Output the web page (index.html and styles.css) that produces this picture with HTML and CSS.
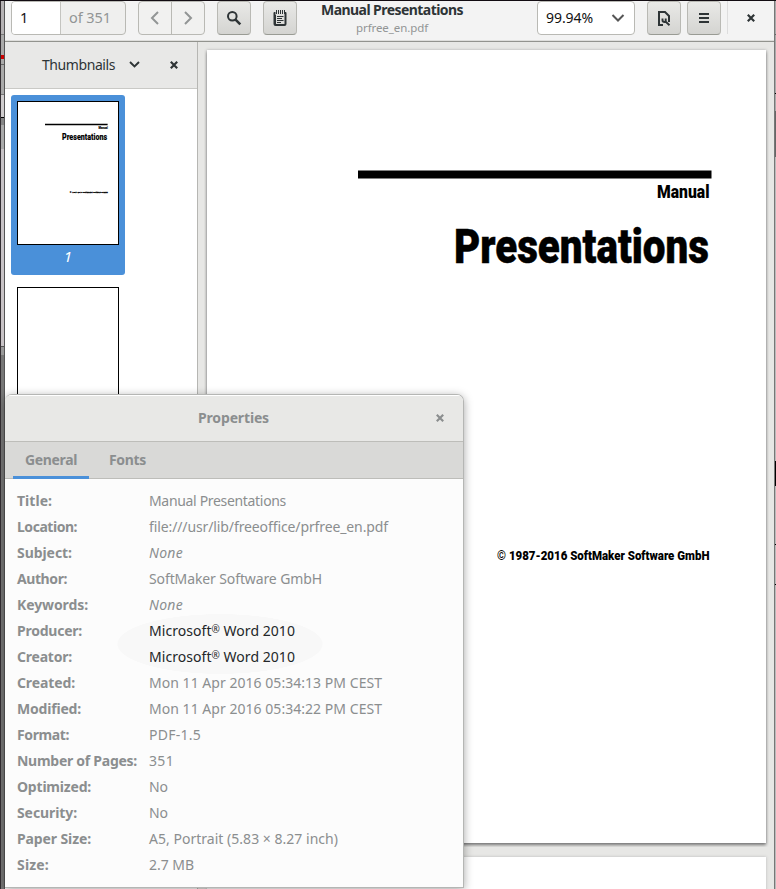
FILE: index.html
```html
<!DOCTYPE html>
<html lang="en">
<head>
<meta charset="utf-8">
<title>Manual Presentations</title>
<link rel="stylesheet" href="styles.css">
</head>
<body>
<div class="desktop">
  <div class="edge edge-left"></div>
  <main class="window">
    <header class="toolbar">
      <div class="page-entry"><span class="current">1</span><span class="total"><span class="t" data-w="42">of 351</span></span></div>
      <div class="nav">
        <span class="nav-btn"><svg width="16" height="16"><path d="M11 2 5 8l6 6"/></svg></span>
        <span class="nav-btn"><svg width="16" height="16"><path d="m5 2 6 6-6 6"/></svg></span>
      </div>
      <div class="button search"><svg width="16" height="16" fill="none" stroke="#2e3436"><circle cx="6.3" cy="6.3" r="4.3" stroke-width="2"/><path d="m9.3 9.3 5 5" stroke-width="2.6"/></svg></div>
      <div class="button notes"><svg width="16" height="16"><path fill="#2e3436" fill-rule="evenodd" d="M1.500 3q0-1 1-1H3.500v3h9V2h1q1 0 1 1V14q0 2-2 2h-9q-2 0-2-2zM4 5v9h8.500V5z"/><path d="M4.500 0v4M6.500 0v4M8.500 0v4M10.500 0v4M12.500 0v4" stroke="#2e3436"/><path d="M5 6.500h6.500M5 8.500h5M5 10.500h6.500M5 12.500h4" stroke="#2e3436"/></svg></div>
      <div class="titles"><b><span class="t" data-w="142">Manual Presentations</span></b><small><span class="t" data-w="72">prfree_en.pdf</span></small></div>
      <div class="zoom"><span class="t" data-w="47">99.94%</span><svg width="16" height="16"><path d="m2.500 5 5.500 5.500L13.500 5"/></svg></div>
      <div class="button doc"><svg width="16" height="16" fill="none" stroke="#2e3436" stroke-width="2"><path d="M7 15H3V2h6l4 4v6"/><path d="M6.500 8.500v1.800q0 1.700 2.200 1.700h1V8.500M9.500 11.500l4 3.700" stroke-width="1.900"/></svg></div>
      <div class="button menu"><svg width="16" height="16"><path d="M3 4h10M3 8h10M3 12h10" stroke="#2e3436" stroke-width="2"/></svg></div>
      <div class="close-area"><svg class="close" width="8" height="8"><path d="m.8.8 6.400 6.400M7.200.8.8 7.200"/></svg></div>
    </header>
    <div class="content">
      <aside class="sidebar">
        <div class="side-head"><span class="t" data-w="73">Thumbnails</span><svg class="chevron" width="12" height="8"><path d="m1 1 4.500 4.500L10 1"/></svg><svg class="close" width="8" height="8"><path d="m.8.8 6.400 6.400M7.200.8.8 7.200"/></svg></div>
        <div class="thumbs">
          <div class="thumb selected">
            <svg class="sheet" viewBox="0 0 559 793" preserveAspectRatio="none">
              <path d="M151 126h350" stroke="#000" stroke-width="9"/>
              <text x="450" y="150" class="art" font-size="20" textLength="52" lengthAdjust="spacingAndGlyphs">Manual</text>
              <text x="246" y="213" class="art" font-size="48" textLength="253" lengthAdjust="spacingAndGlyphs">Presentations</text>
              <text x="290" y="510" class="art bold-small" font-size="13" textLength="212" lengthAdjust="spacingAndGlyphs">© 1987-2016 SoftMaker Software GmbH</text>
            </svg>
            <i>1</i>
          </div>
          <div class="thumb"><div class="sheet"></div></div>
        </div>
      </aside>
      <section class="document">
        <article class="page">
          <svg width="559" height="793">
            <path d="M151 124.500h353.500" stroke="#000" stroke-width="8"/>
            <text x="450" y="148" class="art fine" font-size="18.500" textLength="52.500" lengthAdjust="spacingAndGlyphs">Manual</text>
            <text x="247" y="213" class="art" font-size="48" textLength="255" lengthAdjust="spacingAndGlyphs">Presentations</text>
            <text x="290" y="510" class="art fine" font-size="12.500" textLength="212.500" lengthAdjust="spacingAndGlyphs">© 1987-2016 SoftMaker Software GmbH</text>
          </svg>
        </article>
        <article class="page next"></article>
      </section>
    </div>
  </main>
  <div class="edge edge-right"></div>
  <section class="dialog">
    <header class="dialog-head"><b><span class="t" data-w="71">Properties</span></b><svg class="close" width="8" height="8"><path d="m.8.8 6.400 6.400M7.200.8.8 7.200"/></svg></header>
    <nav class="tabs"><span class="tab active"><span class="t" data-w="52">General</span></span><span class="tab"><span class="t" data-w="37">Fonts</span></span></nav>
    <dl class="props">
      <dt><span class="t" data-w="35">Title:</span></dt><dd><span class="t" data-w="137">Manual Presentations</span></dd>
      <dt><span class="t" data-w="60">Location:</span></dt><dd><span class="t" data-w="239">file:///usr/lib/freeoffice/prfree_en.pdf</span></dd>
      <dt><span class="t" data-w="55">Subject:</span></dt><dd><span class="t it" data-w="34">None</span></dd>
      <dt><span class="t" data-w="50">Author:</span></dt><dd><span class="t" data-w="173">SoftMaker Software GmbH</span></dd>
      <dt><span class="t" data-w="71">Keywords:</span></dt><dd><span class="t it" data-w="34">None</span></dd>
      <dt><span class="t" data-w="65">Producer:</span></dt><dd class="strong"><span class="t" data-w="146">Microsoft<span class="reg">®</span> Word 2010</span></dd>
      <dt><span class="t" data-w="55">Creator:</span></dt><dd class="strong"><span class="t" data-w="146">Microsoft<span class="reg">®</span> Word 2010</span></dd>
      <dt><span class="t" data-w="58">Created:</span></dt><dd><span class="t" data-w="233">Mon 11 Apr 2016 05:34:13 PM CEST</span></dd>
      <dt><span class="t" data-w="64">Modified:</span></dt><dd><span class="t" data-w="233">Mon 11 Apr 2016 05:34:22 PM CEST</span></dd>
      <dt><span class="t" data-w="52">Format:</span></dt><dd><span class="t" data-w="52">PDF-1.5</span></dd>
      <dt><span class="t" data-w="120">Number of Pages:</span></dt><dd><span class="t" data-w="25">351</span></dd>
      <dt><span class="t" data-w="74">Optimized:</span></dt><dd><span class="t" data-w="19">No</span></dd>
      <dt><span class="t" data-w="60">Security:</span></dt><dd><span class="t" data-w="19">No</span></dd>
      <dt><span class="t" data-w="74">Paper Size:</span></dt><dd><span class="t" data-w="189">A5, Portrait (5.83 × 8.27 inch)</span></dd>
      <dt><span class="t" data-w="32">Size:</span></dt><dd><span class="t" data-w="45">2.7 MB</span></dd>
    </dl>
  </section>
</div>
<script src="fit.js"></script>
</body>
</html>
```
FILE: fit.js
```js
// Tracks each label so that it fills the width given in data-w.
document.querySelectorAll('.t').forEach(function (el) {
  var natural = el.getBoundingClientRect().width;
  var spacing = (Number(el.dataset.w) - natural) / el.textContent.length;
  el.style.letterSpacing = spacing + 'px';
});
```
FILE: styles.css
```css
* { box-sizing: border-box; }
body { margin: 0; font: 14px/20px "Noto Sans", "Open Sans", sans-serif; color: #2e3436; }
svg { display: block; flex: none; }
.t { display: inline-block; white-space: nowrap; font-variant-ligatures: none; }
.desktop { position: relative; display: flex; width: 776px; height: 889px; overflow: hidden; border-top: 1px solid #120c12; background: #777; }
.edge-left { width: 5px; background:
  linear-gradient(90deg, transparent 4px, #555 4px),
  linear-gradient(#c00, #c00) 1px 54px / 3px 4px no-repeat,
  linear-gradient(90deg, #342f33 1px, transparent 1px),
  linear-gradient(#b5b2b4 33px, #777 33px 34px, #aaa 34px 63px, #666 63px 64px, #aaa 64px 93px, #777 93px 94px, #d0cdce 94px 116px, #000 116px 117px, #858585 117px 124px, #aaa 124px 148px, #c8c3c6 148px 345px, #555 345px 346px, #999 346px 354px, #777 354px); }
.edge-right { width: 2px; background: linear-gradient(90deg, #777 1px, transparent 1px), linear-gradient(#aaa 33px, #666 33px 34px, #aaa 34px 92px, #000 92px 93px, #aaa 93px 110px, #666 110px 156px, #bbb 156px 460px, #000 460px 485px, #bbb 485px 543px, #000 543px 544px, #bbb 544px 583px, #000 583px 584px, #bbb 584px); }
.window { width: 769px; display: flex; flex-direction: column; background: #e7e7e5; }

.toolbar { height: 41px; display: flex; align-items: flex-start; padding-left: 6px; background: #f3f3f3; border-bottom: 1px solid #92938e; box-shadow: inset 0 -1px #dededc; flex: none; }
.page-entry, .nav, .zoom, .button { height: 34px; border: 1px solid #b9b9b4; border-radius: 4px; display: flex; align-items: center; flex: none; }
.page-entry { width: 115px; overflow: hidden; background: #efefee; color: #929595; font-size: 14.500px; }
.page-entry .current { width: 49px; height: 32px; padding: 5px 8px; background: #fff; color: #111; border-right: 1px solid #c4c4c0; }
.page-entry .total { padding-left: 8px; margin-top: -2px; }
.nav { width: 67px; margin-left: 12px; background: #f1f1f0; }
.nav-btn { flex: 1; height: 32px; display: grid; place-items: center; }
.nav-btn + .nav-btn { border-left: 1px solid #b9b9b4; }
.nav path { fill: none; stroke: #929595; stroke-width: 2; }
.button { width: 34px; justify-content: center; background: linear-gradient(#e9e9e7, #d4d4d1); border-bottom-color: #999b94; }
.search { margin-left: 12px; }
.notes { margin-left: 12px; }
.titles { width: 190px; display: flex; flex-direction: column; align-items: center; }
.titles b { height: 18px; line-height: 18px; }
.titles small { font-size: 11.500px; line-height: 18px; color: #929595; }
.zoom { width: 98px; margin-left: 50px; padding: 0 8px; justify-content: space-between; background: #fff; color: #111; }
.zoom path { fill: none; stroke: #555; stroke-width: 2; }
.doc { margin-left: 12px; }
.menu { margin-left: 6px; }
.close-area { height: 33px; margin-left: 6px; padding-left: 19px; border-left: 1px solid #ddd; display: flex; align-items: center; }
.close path, .chevron path { fill: none; stroke: #2e3436; stroke-width: 2.200; }
.chevron path { stroke-width: 1.900; }

.content { flex: 1; min-height: 0; display: flex; }
.sidebar { width: 193px; border-right: 1px solid #b6b6b3; background: #fff; }
.side-head { height: 47px; display: flex; align-items: center; padding-left: 37px; background: #e8e8e7; border-bottom: 1px solid #c9c9c6; }
.chevron { margin-left: 14px; }
.side-head .close { margin-left: 29px; }
.thumbs { padding: 6px; }
.thumb { width: 114px; height: 180px; padding: 6px; border-radius: 3px; }
.thumb + .thumb { margin-top: 6px; }
.selected { background: #4a90d9; color: #fff; text-align: center; }
.sheet { width: 102px; height: 144px; background: #fff; border: 1px solid #000; }
.selected i { display: block; line-height: 23px; font-size: 15px; }
.document { flex: 1; padding: 8px 8px 0 9px; overflow: hidden; }
.page { height: 793px; width: 559px; background: #fff; box-shadow: 0 2px 3px #777, 0 0 3px #bbb; clip-path: inset(-3px -3px -4px -3px); }
.next { margin-top: 14px; box-shadow: 0 0 3px #bbb; }
.art { font-family: "Liberation Sans Narrow", "Roboto", sans-serif; font-weight: 900; fill: #000; stroke: #000; stroke-width: .5px; }
.fine { stroke: none; }
.bold-small { stroke-width: 1.500px; }

.dialog { position: absolute; left: 5px; top: 393px; width: 459px; height: 494px; background: #fcfcfc; border: 1px solid #b5b6b4; border-left: 0; border-radius: 7px 7px 0 0; box-shadow: 0 2px 10px rgba(0,0,0,.35); color: #8b8e8f; overflow: hidden; }
.dialog-head { height: 47px; display: flex; align-items: center; background: #e8e8e6; border-bottom: 1px solid #bdbdb9; box-shadow: inset 0 1px #fff; }
.dialog-head b { margin-left: 193px; }
.dialog-head .close { margin-left: 167px; }
.dialog-head .close path { stroke: #8b8e8f; }
.tabs { height: 37px; display: flex; background: #d9d9d7; border-bottom: 1px solid #bdbdb9; padding-left: 8px; gap: 8px; font-weight: 700; }
.tab { padding: 8px 12px; height: 37px; }
.active { border-bottom: 3px solid #4a90d9; width: 76px; }
.props { margin: 0; padding: 9px 12px; display: grid; grid-template-columns: 132px 1fr; grid-auto-rows: 26px; line-height: 26px; background: radial-gradient(ellipse 103px 30px at 215px 165px, #f8f8f8 99%, transparent 100%); }
.props dt { font-weight: 700; }
.props dd { margin: 0; }
.it { font-style: italic; }
.strong { color: #232729; }
.reg { font-size: 10px; line-height: 1; vertical-align: 3px; }
```
